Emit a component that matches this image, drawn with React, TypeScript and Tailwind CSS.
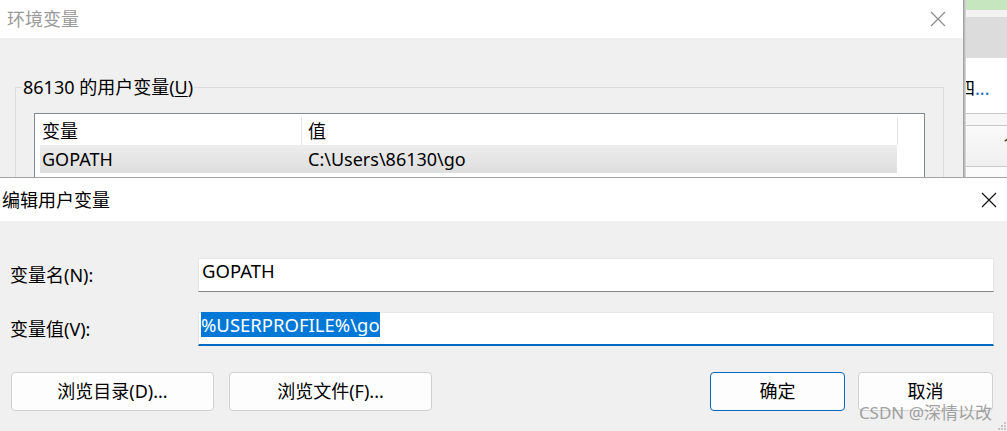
import React from 'react';

function CloseIcon({ color }: { color: string }) {
  return (
    <svg width="16" height="16" viewBox="0 0 16 16" fill="none">
      <path d="M1 1L15 15M15 1L1 15" stroke={color} strokeWidth="1.2" />
    </svg>
  );
}

function BackWindow() {
  return (
    <div className="w-[963px] h-full shrink-0 flex flex-col overflow-hidden">
      <div className="h-[38px] shrink-0 bg-white flex items-center justify-between pl-[7px] pr-[17px] text-[#9a9a9a]">
        <span className="leading-[24px]">环境变量</span>
        <CloseIcon color="#8c8c8c" />
      </div>
      <div className="flex-1 bg-[#f0f0f0] pl-[15px] pr-[19px]">
        <fieldset className="mt-[37px] border border-[#dcdcdc] pl-[6px] h-[200px]">
          <legend className="px-[1px] leading-[24px] text-black">
            86130 的用户变量(<span className="underline underline-offset-2">U</span>)
          </legend>
          <div className="mt-[14px] ml-[12px] w-[891px] h-[120px] border border-[#828790] bg-white">
            <div className="flex h-[31px] items-center pt-[3px] text-black">
              <div className="w-[267px] h-full pl-[7px] border-r border-[#e5e5e5] flex items-center">变量</div>
              <div className="w-[596px] h-full pl-[6px] border-r border-[#e5e5e5] flex items-center">值</div>
            </div>
            <div className="ml-[5px] w-[857px] h-[28px] flex items-center bg-gradient-to-b from-[#ededed] to-[#dedede] text-black">
              <div className="w-[268px] pl-[2px]">GOPATH</div>
              <div>C:\Users\86130\go</div>
            </div>
          </div>
        </fieldset>
      </div>
    </div>
  );
}

function BehindApp() {
  return (
    <div className="flex-1 h-full flex flex-col overflow-hidden bg-[#fbfbfb]">
      <div className="h-[10px] bg-[#c6e6c0]" />
      <div className="h-[7px] bg-[#f3f3f3]" />
      <div className="h-[41px] bg-[#dcdcdc]" />
      <div className="h-[55px] bg-white flex items-center pt-[5px] overflow-hidden">
        <span className="-ml-[9px] whitespace-nowrap text-[18px] text-black">
          四<span className="text-[#1a6fc4]">...</span>
        </span>
      </div>
      <div className="h-[12px] border-t border-[#c8c8c8] bg-[#f7f7f7]" />
      <div className="h-[42px] border-t border-[#c8c8c8] border-b bg-gradient-to-b from-[#fafafa] to-[#f0f0f0] flex items-start justify-end overflow-hidden">
        <span className="-mr-[6px] mt-[5px] text-[#333]">1</span>
      </div>
    </div>
  );
}

function FrontWindow() {
  return (
    <div className="border-t border-[#a4a4a4]">
      <div className="h-[43px] bg-white flex items-center justify-between pl-[2px] pr-[10px] text-black">
        <span className="leading-[24px]">编辑用户变量</span>
        <CloseIcon color="#111" />
      </div>
      <div className="bg-[#f0f0f0] pt-[37px] pl-[10px] pr-[13px] pb-[20px] text-black">
        <div className="flex items-center">
          <div className="w-[188px]">变量名(N):</div>
          <div className="flex-1 h-[34px] bg-white border border-[#e6e6e6] border-b-[#868686] pl-[3px] leading-[24px] text-[18.5px]">
            GOPATH
          </div>
        </div>
        <div className="flex items-center mt-[20px]">
          <div className="w-[188px]">变量值(V):</div>
          <div className="flex-1 h-[34px] bg-white border border-[#e6e6e6] border-b-2 border-b-[#0067c0] pl-[2px] leading-[24px] text-[18.5px]">
            <span className="bg-[#0078d7] text-white">%USERPROFILE%\go</span>
          </div>
        </div>
        <div className="flex mt-[26px] pl-[1px] pr-[1px]">
          <button className="w-[203px] h-[39px] rounded-[4px] border border-[#d0d0d0] bg-[#fdfdfd]">浏览目录(D)...</button>
          <button className="ml-[15px] w-[203px] h-[39px] rounded-[4px] border border-[#d0d0d0] bg-[#fdfdfd]">浏览文件(F)...</button>
          <button className="ml-auto w-[135px] h-[39px] rounded-[4px] border border-[#0067c0] bg-[#fdfdfd]">确定</button>
          <button className="ml-[13px] w-[135px] h-[39px] rounded-[4px] border border-[#d0d0d0] bg-[#fdfdfd]">取消</button>
        </div>
      </div>
    </div>
  );
}

export default function App() {
  return (
    <div className="relative w-[1007px] h-[431px] overflow-hidden bg-[#f0f0f0] font-['Noto_Sans','Noto_Sans_CJK_SC',sans-serif] text-[18px]">
      <div className="flex h-[177px]">
        <BackWindow />
        <div className="w-[3px] h-full bg-gradient-to-r from-[#9a9a9a] to-[#dedede]" />
        <BehindApp />
      </div>
      <FrontWindow />
      <div className="absolute right-[15px] bottom-[8px] leading-[20px] text-[17px] text-[#8a8a8a]/80 whitespace-nowrap">
        CSDN @深情以改
      </div>
      <svg className="absolute right-0 bottom-0" width="9" height="9" viewBox="0 0 9 9">
        <rect x="6" y="0" width="2" height="2" fill="#c4c4c4" />
        <rect x="3" y="3" width="2" height="2" fill="#c4c4c4" />
        <rect x="6" y="3" width="2" height="2" fill="#c4c4c4" />
        <rect x="0" y="6" width="2" height="2" fill="#c4c4c4" />
        <rect x="3" y="6" width="2" height="2" fill="#c4c4c4" />
        <rect x="6" y="6" width="2" height="2" fill="#c4c4c4" />
      </svg>
    </div>
  );
}
